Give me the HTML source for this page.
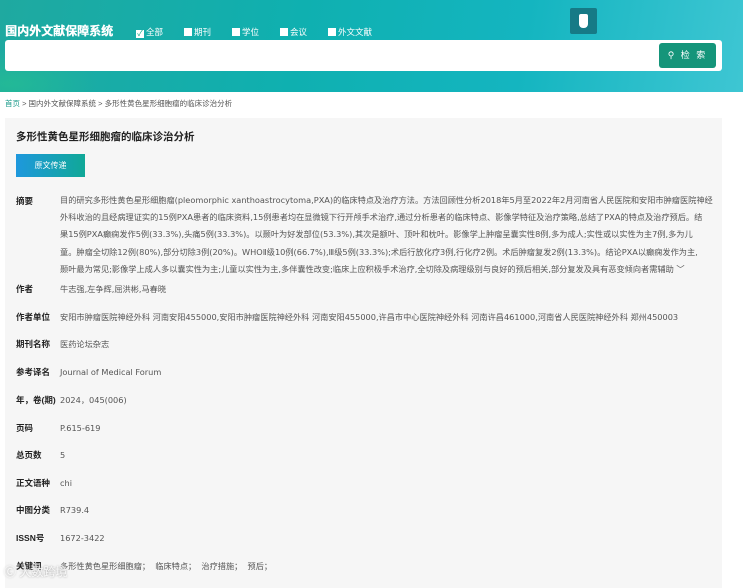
<!DOCTYPE html>
<html><head><meta charset="utf-8">
<style>
*{margin:0;padding:0;box-sizing:border-box}
body{width:743px;height:584px;overflow:hidden;background:#fff;font-family:"Liberation Sans","Noto Sans CJK SC",sans-serif;position:relative}
.hdr{position:absolute;left:0;top:0;width:743px;height:92px;background:linear-gradient(100deg,#1fa9a0 0%,#0fb0b0 40%,#14b5c0 70%,#3ec6d3 100%)}
.hdr .glow{position:absolute;left:0;top:50px;width:100px;height:42px;background:radial-gradient(ellipse at 10% 80%,rgba(40,200,140,.5),transparent 70%)}
.ttl{position:absolute;left:5px;top:24px;color:#fff;font-weight:bold;font-size:12px;line-height:14px;text-shadow:0.4px 0 0 #fff}
.cb{position:absolute;top:26px;color:#fff;font-size:8.5px;line-height:12px}
.cb i{display:inline-block;width:8px;height:8px;background:#fff;margin-right:2px;vertical-align:-1px;font-style:normal;color:#1a8;font-size:8px;line-height:8px;text-align:center}
.ico{position:absolute;left:570px;top:8px;width:27px;height:26px;background:#167a86;border-radius:2px}
.ico b{position:absolute;left:9px;top:6px;width:9px;height:14px;background:#fff;border-radius:2px 2px 4px 4px}
.sb{position:absolute;left:5px;top:40px;width:717px;height:31px;background:#fff;border-radius:3px}
.btn{position:absolute;left:659px;top:43px;width:57px;height:25px;background:#15957a;border-radius:3px;color:#fff;font-size:9px;line-height:25px;text-align:center;letter-spacing:2px}
.bc{position:absolute;left:5px;top:99px;font-size:7.5px;color:#555;line-height:10px}
.bc span{color:#1a9a8a}
.panel{position:absolute;left:5px;top:118px;width:717px;height:470px;background:#f6f6f6}
.h1{position:absolute;left:16px;top:129px;font-size:10.5px;font-weight:bold;color:#222}
.ob{position:absolute;left:16px;top:154px;width:69px;height:23px;background:linear-gradient(90deg,#1e98dd,#10a897);color:#fff;font-size:8px;line-height:23px;text-align:center}
.lab{position:absolute;left:16px;font-size:8.5px;font-weight:bold;color:#222;line-height:12px}
.val{position:absolute;left:60px;color:#555;line-height:12px;font-family:"DejaVu Sans","Noto Sans CJK SC",sans-serif;font-size:8.2px;white-space:nowrap}
.abs{position:absolute;left:60px;top:192px;line-height:17.2px;color:#555;white-space:nowrap;font-family:"DejaVu Sans","Noto Sans CJK SC",sans-serif;font-size:8.2px}
</style></head><body>
<div class="hdr"><div class="glow"></div></div>
<div class="ttl">国内外文献保障系统</div>
<div class="cb" style="left:136px"><i>✓</i>全部</div>
<div class="cb" style="left:184px"><i></i>期刊</div>
<div class="cb" style="left:232px"><i></i>学位</div>
<div class="cb" style="left:280px"><i></i>会议</div>
<div class="cb" style="left:328px"><i></i>外文文献</div>
<div class="ico"><b></b></div>
<div class="sb"></div>
<div class="btn">⚲ 检 索</div>
<div class="bc"><span>首页</span> &gt; 国内外文献保障系统 &gt; 多形性黄色星形细胞瘤的临床诊治分析</div>
<div class="panel"></div>
<div class="h1">多形性黄色星形细胞瘤的临床诊治分析</div>
<div class="ob">原文传递</div>
<div class="lab" style="top:195px">摘要</div>
<div class="abs">目的研究多形性黄色星形细胞瘤(pleomorphic xanthoastrocytoma,PXA)的临床特点及治疗方法。方法回顾性分析2018年5月至2022年2月河南省人民医院和安阳市肿瘤医院神经<br>外科收治的且经病理证实的15例PXA患者的临床资料,15例患者均在显微镜下行开颅手术治疗,通过分析患者的临床特点、影像学特征及治疗策略,总结了PXA的特点及治疗预后。结<br>果15例PXA癫痫发作5例(33.3%),头痛5例(33.3%)。以颞叶为好发部位(53.3%),其次是额叶、顶叶和枕叶。影像学上肿瘤呈囊实性8例,多为成人;实性或以实性为主7例,多为儿<br>童。肿瘤全切除12例(80%),部分切除3例(20%)。WHOⅡ级10例(66.7%),Ⅲ级5例(33.3%);术后行放化疗3例,行化疗2例。术后肿瘤复发2例(13.3%)。结论PXA以癫痫发作为主,<br>颞叶最为常见;影像学上成人多以囊实性为主;儿童以实性为主,多伴囊性改变;临床上应积极手术治疗,全切除及病理级别与良好的预后相关,部分复发及具有恶变倾向者需辅助 ﹀</div>
<div class="lab" style="top:283px">作者</div><div class="val" style="top:283px">牛志强,左争辉,屈洪彬,马春晓</div>
<div class="lab" style="top:311px">作者单位</div><div class="val" style="top:311px">安阳市肿瘤医院神经外科 河南安阳455000,安阳市肿瘤医院神经外科 河南安阳455000,许昌市中心医院神经外科 河南许昌461000,河南省人民医院神经外科 郑州450003</div>
<div class="lab" style="top:338px">期刊名称</div><div class="val" style="top:338px">医药论坛杂志</div>
<div class="lab" style="top:366px">参考译名</div><div class="val" style="top:366px">Journal of Medical Forum</div>
<div class="lab" style="top:394px">年，卷(期)</div><div class="val" style="top:394px">2024，045(006)</div>
<div class="lab" style="top:422px">页码</div><div class="val" style="top:422px">P.615-619</div>
<div class="lab" style="top:449px">总页数</div><div class="val" style="top:449px">5</div>
<div class="lab" style="top:477px">正文语种</div><div class="val" style="top:477px">chi</div>
<div class="lab" style="top:504px">中图分类</div><div class="val" style="top:504px">R739.4</div>
<div class="lab" style="top:532px">ISSN号</div><div class="val" style="top:532px">1672-3422</div>
<div class="lab" style="top:560px">关键词</div><div class="val" style="top:560px">多形性黄色星形细胞瘤；&nbsp; 临床特点；&nbsp; 治疗措施；&nbsp; 预后；</div>
<div style="position:absolute;left:4px;top:563px;font-size:12px;color:rgba(255,255,255,.85);text-shadow:0 0 2px #999">Ⓒ 大数跨境</div>
</body></html>
